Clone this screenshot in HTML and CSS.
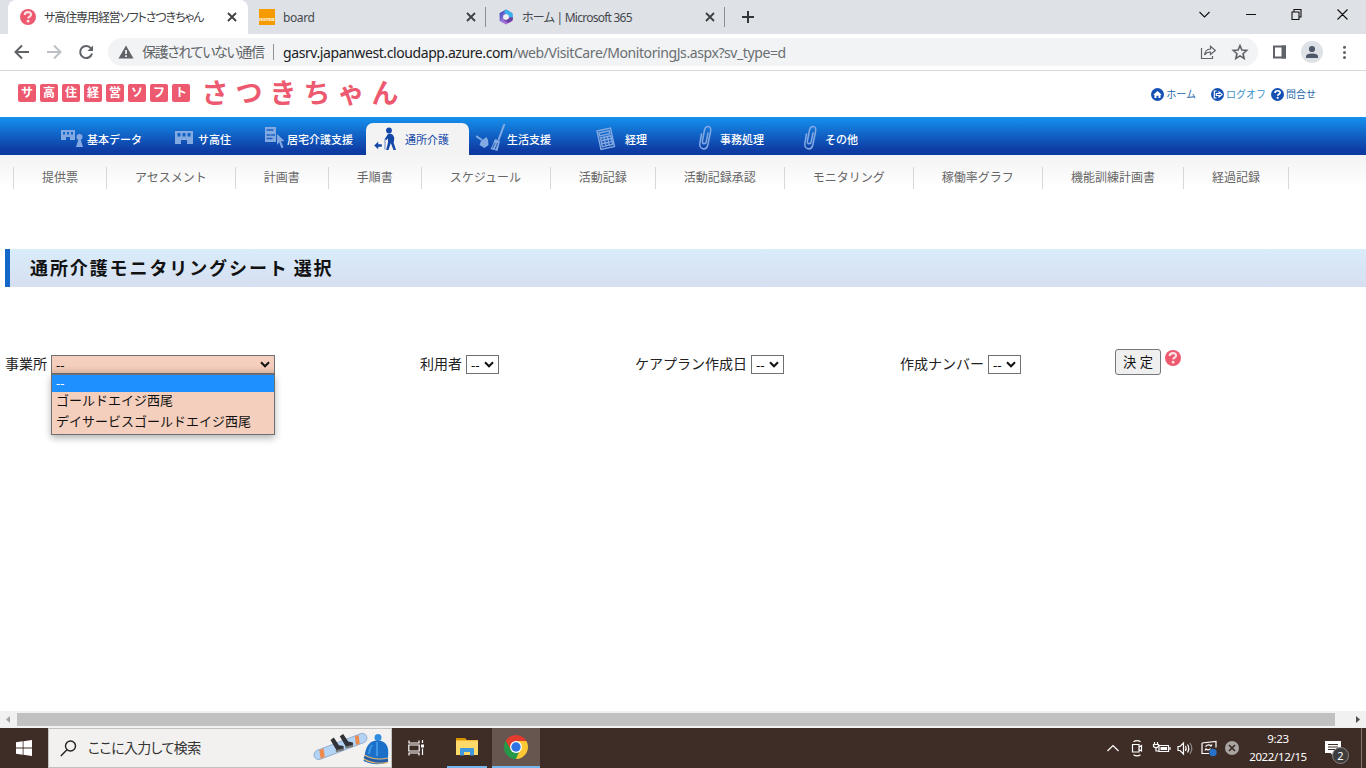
FILE: index.html
```html
<!DOCTYPE html>
<html lang="ja">
<head>
<meta charset="utf-8">
<title>サ高住専用経営ソフトさつきちゃん</title>
<link rel="stylesheet" href="styles.css">
</head>
<body>
<svg width="0" height="0" class="defs">
  <defs>
    <symbol id="help" viewBox="0 0 16 16"><circle cx="8" cy="8" r="8" fill="#ed5a70"/><path d="M4.700 6c.1-3.800 6.400-3.700 6.400-.5 0 2-2.800 2-2.900 3.900" fill="none" stroke="#fbe3e6" stroke-width="2.100"/><circle cx="8.100" cy="12.200" r="1.400" fill="#fbe3e6"/></symbol>
    <symbol id="x" viewBox="0 0 10 10"><path d="M1 1l8 8M9 1L1 9" stroke="#3c4043" stroke-width="1.800" fill="none"/></symbol>
    <symbol id="clip" viewBox="0 0 16 26"><path d="M3.500 9L2 17.500Q1 23 5 23.800Q9 24.500 10 19L12.500 7Q13.500 2 10.500 1.600Q7.500 1.300 6.500 5L4.500 15.500Q4 18.500 6 18.800Q7.800 19 8.300 16.500L10 8" fill="none" stroke="#83a9e3" stroke-width="1.500" stroke-linecap="round"/></symbol>
  </defs>
</svg>

<header class="tabstrip">
  <div class="tab tab-active">
    <svg class="fav" width="16" height="16"><use href="#help"/></svg>
    <span class="tab-title t1">サ高住専用経営ソフトさつきちゃん</span>
    <svg class="close" width="10" height="10"><use href="#x"/></svg>
  </div>
  <div class="tab tab-board">
    <span class="norma">norma</span>
    <span class="tab-title t2">board</span>
    <svg class="close" width="10" height="10"><use href="#x"/></svg>
  </div>
  <div class="tab tab-ms">
    <svg class="fav" width="16" height="16" viewBox="0 0 16 16"><defs><linearGradient id="m" x1="0" y1="0" x2="1" y2="1"><stop offset="0" stop-color="#3546b8"/><stop offset=".5" stop-color="#9a78dc"/><stop offset="1" stop-color="#b85fd2"/></linearGradient></defs><path d="M8 1.500L13.400 4.600V11.400L8 14.500L2.600 11.400V4.600Z" fill="url(#m)" stroke="url(#m)" stroke-width="2" stroke-linejoin="round"/><path d="M8 .5L14 4Q14.800 4.500 14.800 6V10L10.500 7.500V6L6.500 4Q6 1.500 8 .5" fill="#35b2ea"/><path d="M14.800 8V11Q14 12 10 14L5.500 11L10 9Z" fill="#6b3fa2"/><path d="M8 4.800L10.800 6.400V9.600L8 11.200L5.200 9.600V6.400Z" fill="#eef0f5"/></svg>
    <span class="tab-title t3">ホーム | Microsoft 365</span>
    <svg class="close" width="10" height="10"><use href="#x"/></svg>
  </div>
  <svg class="plus" width="12" height="12" viewBox="0 0 12 12"><path d="M6 0v12M0 6h12" stroke="#333639" stroke-width="2"/></svg>
  <div class="winctl">
    <svg width="154" height="14" viewBox="0 0 154 14" fill="none" stroke="#111" stroke-width="1.100"><path d="M.5 5l5 5 5-5M47 7.500h10M93 5h7v7.500h-7zM95 5V2.500h7V10h-2M138.500 2.500l10 10M148.500 2.500l-10 10"/></svg>
  </div>
</header>

<div class="toolbar">
  <svg class="navbtns" width="82" height="20" viewBox="0 0 82 20" fill="none" stroke-width="2"><path d="M15 10H2M8 3.500L1.500 10 8 16.500" stroke="#5f6368"/><path d="M33 10h13M40 3.500L46.500 10 40 16.500" stroke="#bdc1c6"/><path d="M77 6.500A6 6 0 1 0 78 11.500" stroke="#5f6368"/><path d="M79 3.500v5.500h-5.500z" fill="#5f6368"/></svg>
  <div class="omnibox">
    <svg class="warn" width="16" height="14" viewBox="0 0 16 14"><path d="M8 .5L15.500 13.500H.5Z" fill="#5f6368"/><path d="M8 5v4M8 10.300v1.700" stroke="#fff" stroke-width="1.600"/></svg>
    <span class="insecure">保護されていない通信</span>
    <span class="url">gasrv.japanwest.cloudapp.azure.com<span class="path">/web/VisitCare/MonitoringJs.aspx?sv_type=d</span></span>
    <svg class="omni-icons" width="50" height="16" viewBox="0 0 50 16" fill="none" stroke="#5f6368" stroke-width="1.200"><path d="M1.500 4v10.500h11V12M4.500 11Q5 5.500 10.500 5V2.300L15.300 6.500 10.500 10.500V8Q6.500 8 4.500 11Z"/><path d="M40 1.600l1.900 4.500 4.800.4-3.700 3.200 1.200 4.800-4.200-2.600-4.200 2.600L37 9.700l-3.700-3.200 4.800-.4Z" stroke-width="1.600"/></svg>
  </div>
  <svg class="right-icons" width="80" height="22" viewBox="0 0 80 22"><path d="M2 5.500h11v11H2z" fill="none" stroke="#5f6368" stroke-width="2"/><path d="M9.500 4.500h4.500v13H9.500z" fill="#5f6368"/><circle cx="40" cy="11" r="11" fill="#dee1e6"/><circle cx="40" cy="8" r="3.100" fill="#4e596c"/><path d="M34 17v-1.500q0-3 6-3t6 3V17z" fill="#4e596c"/><g fill="#5f6368"><circle cx="72.500" cy="6.200" r="1.500"/><circle cx="72.500" cy="11.400" r="1.500"/><circle cx="72.500" cy="16.600" r="1.500"/></g></svg>
</div>

<main class="page">
  <div class="brand">
    <div class="tiles"><span>サ</span><span>高</span><span>住</span><span>経</span><span>営</span><span>ソ</span><span>フ</span><span>ト</span></div>
    <div class="name"><span>さ</span><span>つ</span><span>き</span><span>ち</span><span>ゃ</span><span>ん</span></div>
    <div class="links">
      <a class="home"><svg width="13" height="13" viewBox="0 0 13 13"><circle cx="6.500" cy="6.500" r="6.500" fill="#1450b4"/><path d="M2.200 6.800L6.500 3l4.300 3.800H9.500V10h-2V7.700h-2V10h-2V6.800Z" fill="#fff"/></svg><span>ホーム</span></a>
      <a class="logoff"><svg width="13" height="13" viewBox="0 0 13 13"><circle cx="6.500" cy="6.500" r="6.500" fill="#1450b4"/><path d="M5.500 3H3.300v7h2.200M5.300 5.500h2.800V4l3 2.500-3 2.500V7.500H5.300Z" fill="none" stroke="#fff" stroke-width="1.200"/></svg><span>ログオフ</span></a>
      <a class="contact"><svg width="13" height="13" viewBox="0 0 13 13"><circle cx="6.500" cy="6.500" r="6.500" fill="#1450b4"/><path d="M4 5c0-3 5.200-2.900 5.200-.4 0 1.500-2.400 1.600-2.500 3.100" fill="none" stroke="#fff" stroke-width="1.700"/><circle cx="6.700" cy="9.800" r="1.100" fill="#fff"/></svg><span>問合せ</span></a>
    </div>
  </div>

  <nav class="mainnav">
    <a><svg width="24" height="22" viewBox="0 0 24 22" fill="#83a9e3"><path fill-rule="evenodd" d="M0 2h14v10H9V9H5v3H0zM2 4v2.500h2V4zm4 0v2.500h2V4zm4 0v2.500h2V4z"/><circle cx="18.500" cy="9" r="3"/><path d="M17.500 11h2l2.500 8h-7z"/></svg><span>基本データ</span></a>
    <a><svg width="20" height="22" viewBox="0 0 20 22" fill="#83a9e3"><path fill-rule="evenodd" d="M0 3h18v13h-6v-4H6v4H0zM2.500 5v3.500h3V5zm5 0v3.500h3V5zm5 0v3.500h3V5z"/></svg><span>サ高住</span></a>
    <a><svg width="22" height="24" viewBox="0 0 22 24"><path d="M0 0h11v15H0z" fill="#83a9e3"/><path d="M1.500 3h7M1.500 8h4M6 8h4M1.500 11.500h6" stroke="#1d62c2" stroke-width="1.300"/><path d="M12 7l7.500 7-3.500.3 2.500 6-2 1-2.300-6-2.200 2.600z" fill="#83a9e3"/></svg><span>居宅介護支援</span></a>
    <a class="current"><svg width="24" height="24" viewBox="0 0 24 24"><circle cx="15" cy="3.500" r="2.900" fill="#1347a8"/><path d="M14 7Q19 5.500 20.300 11l-.6 5 2.300 7h-2.500l-2.700-7-2.300 7h-2.300l1.800-7.500v-4l-1.700 1.500-1.700-.7z" fill="#1347a8"/><path d="M11 12v10.500" stroke="#6c8cc9"/><path d="M.2 18.500l4-3.800v2.500h3.600v2.600H4.200v2.500z" fill="#1347a8"/></svg><span>通所介護</span></a>
    <a><svg width="30" height="28" viewBox="0 0 30 28"><path d="M0 12l6 4M28.500 0l-6 16" stroke="#83a9e3" stroke-width="2"/><path d="M5 17l5.500-4 1.500 3 .5 5-4 3-5-3zM19 15l5 2-2.500 10-7-2 2-4z" fill="#83a9e3"/><path d="M16.500 24l2.500-5M19 25.500l2.500-6.500" stroke="#255eb5"/></svg><span>生活支援</span></a>
    <a><svg width="20" height="24" viewBox="0 0 20 24" fill="none" stroke="#83a9e3"><path d="M1 4L14.500 1l4 18.500L5 22.500zM3.200 6l10-2.200.6 3-10 2.200z" stroke-width="1.400"/><path d="M4.500 11l10.300-2.300 1.900 8.600-10.300 2.300zM5.200 13.800l10.200-2.300M5.800 16.700l10.300-2.300M7.900 10.200l2 8.700M11.400 9.500l1.900 8.600" stroke-width="1.400"/></svg><span>経理</span></a>
    <a><svg width="16" height="26"><use href="#clip"/></svg><span>事務処理</span></a>
    <a><svg width="16" height="26"><use href="#clip"/></svg><span>その他</span></a>
  </nav>

  <nav class="subnav">
    <a>提供票</a><a>アセスメント</a><a>計画書</a><a>手順書</a><a class="schedule">スケジュール</a><a>活動記録</a><a>活動記録承認</a><a>モニタリング</a><a>稼働率グラフ</a><a>機能訓練計画書</a><a>経過記録</a>
  </nav>

  <h1>通所介護モニタリングシート 選択</h1>

  <form class="filters">
    <div class="field">
      <label>事業所</label>
      <div class="select wide">--<svg width="10" height="7" viewBox="0 0 10 7"><path d="M1 1.300l4 4 4-4" fill="none" stroke="#111" stroke-width="2"/></svg>
        <ul class="menu"><li class="on">--</li><li>ゴールドエイジ西尾</li><li>デイサービスゴールドエイジ西尾</li></ul>
      </div>
    </div>
    <div class="field"><label>利用者</label><div class="select">--<svg width="10" height="7" viewBox="0 0 10 7"><path d="M1 1.300l4 4 4-4" fill="none" stroke="#111" stroke-width="2"/></svg></div></div>
    <div class="field"><label>ケアプラン作成日</label><div class="select">--<svg width="10" height="7" viewBox="0 0 10 7"><path d="M1 1.300l4 4 4-4" fill="none" stroke="#111" stroke-width="2"/></svg></div></div>
    <div class="field"><label>作成ナンバー</label><div class="select">--<svg width="10" height="7" viewBox="0 0 10 7"><path d="M1 1.300l4 4 4-4" fill="none" stroke="#111" stroke-width="2"/></svg></div></div>
    <div class="actions"><button type="button">決 定</button><svg width="16" height="16"><use href="#help"/></svg></div>
  </form>
</main>

<div class="hscroll">
  <svg width="17" height="17" viewBox="0 0 17 17"><path d="M10 5v7L6 8.500z" fill="#a3a3a3"/></svg>
  <div class="thumb"></div>
  <svg class="arrow-r" width="17" height="17" viewBox="0 0 17 17"><path d="M7 5v7l4-3.500z" fill="#505050"/></svg>
</div>

<footer class="taskbar">
  <div class="start"><svg width="16" height="16" viewBox="0 0 16 16" fill="#fff"><path d="M0 2.300L6.700 1.300V7.600H0zM7.500 1.200L16 0v7.600H7.500zM0 8.400h6.700v6.300L0 13.700zM7.500 8.400H16V16L7.500 14.800z"/></svg></div>
  <div class="search">
    <svg class="mag" width="17" height="17" viewBox="0 0 17 17" fill="none" stroke="#222" stroke-width="1.400"><circle cx="10.500" cy="6" r="5"/><path d="M7 9.700L.8 16"/></svg>
    <span>ここに入力して検索</span>
    <svg class="art" width="76" height="36" viewBox="0 0 76 36">
      <g transform="rotate(-21 27 18)"><rect x="0" y="12" width="56" height="9.500" rx="4.700" fill="#b3d4f5" stroke="#7f9fc4" stroke-width=".7"/><path d="M7 12.500h4.500l-2 8.500H5zM45 12.500h4l-2 8.500h-4z" fill="#ee8a4e"/><path d="M21 7l4-1 2 9 4 2.500-1 3-7-1zM31 7l4-1 2 9 4 2.500-1 3-7-1z" fill="#303238"/><path d="M22 19.500l8 1M32 19.500l8 1" stroke="#777" stroke-width="2"/></g>
      <circle cx="65" cy="7.500" r="3.500" fill="#2f8de0"/><path d="M51.500 27Q53 10 65 10.500T75 27v5Q64 37 50.500 31z" fill="#1c6fc9"/><path d="M59 15q-3 4-3 9M64 12v14" stroke="#3d96e4" stroke-width="2" fill="none"/><path d="M51.500 25Q62 31 75 28M51 29Q61 35 75 32.500" stroke="#edb05c" stroke-width="1.200" fill="none"/><path d="M51 27Q61 33 75 30.300" stroke="#2b5a9a" stroke-width="1.500" fill="none"/>
    </svg>
  </div>
  <div class="app taskview"><svg width="17" height="16" viewBox="0 0 17 16" fill="none" stroke="#fff" stroke-width="1.200"><path d="M1 .5V3h10V.5M1 15.500V13h10v2.500M.8 5h10.400v6H.8zM14.500 0v3M14.500 8.500V15"/><path d="M13 4.500h3v3h-3z" fill="#fff" stroke="none"/></svg></div>
  <div class="app explorer"><svg width="22" height="20" viewBox="0 0 22 20"><path d="M0 1h9l1.500 2H22v15H0z" fill="#f5b830"/><path d="M0 4h22v14H0z" fill="#ffda6b"/><path d="M0 1h9v2H0z" fill="#d99200"/><path d="M4 18.500V12q0-1 1-1h12q1 0 1 1v6.500h-4V15H8v3.500z" fill="#3f99dc"/></svg></div>
  <div class="app chrome"><svg width="24" height="24" viewBox="0 0 24 24"><path d="M12 12L1.610 6A12 12 0 0 1 22.390 6Z" fill="#e33b2e"/><path d="M12 12L22.390 6A12 12 0 0 1 12 24Z" fill="#fcc934"/><path d="M12 12L12 24A12 12 0 0 1 1.610 6Z" fill="#279847"/><path d="M12 6h10.400L17.200 15 12 24z" fill="#fcc934"/><path d="M1.610 6L12 6v6l-5.200 3z" fill="#e33b2e"/><path d="M1.610 6l5.200 9 5.200 3 3-1L12 24A12 12 0 0 1 1.610 6Z" fill="#279847"/><circle cx="12" cy="12" r="6" fill="#fff"/><circle cx="12" cy="12" r="4.700" fill="#2f73e3"/></svg></div>
  <svg class="tray" width="134" height="20" viewBox="0 0 134 20" fill="none" stroke="#fff" stroke-width="1.200">
    <path d="M1.500 13L7 7.500l5.500 5.500"/>
    <path d="M26.500 6.500h6.500v7.500h-6.500zM33 9l2.500-1.500v5.500L33 11.500M27.500 3.800q3.500-2.500 7 0M27.500 16.700q3.500 2.500 7 0"/>
    <path d="M53 7.500h9.500v6H53zM64 9v3"/><path d="M54.500 9h6.500v3h-6.500z" fill="#fff" stroke="none"/><path d="M48.500 4v2M51.500 4v2M47.500 6.500h5v2q-2.500 2.500-5 0zM50 9.500v3.500h3"/>
    <path d="M72 8.500h2l3.500-3.500v11L74 12.500h-2zM79.500 8q1.300 2.500 0 5M81.500 6.500q2.500 4 0 8"/><path d="M84 5q3.500 5.500 0 11" stroke="#888"/>
    <path d="M96 5l14-1.500v6M96 5v10.500h7M99.500 8.500q3-3 5.500-.5l1-1.500M104.500 10.500q-2 2.500-4.500.5l-1 1.500"/><circle cx="107" cy="14.500" r="3.700" fill="#2672c6" stroke="none"/>
    <circle cx="126" cy="10" r="7" fill="#aaa5a2" stroke="none"/><path d="M123 7l6 6M129 7l-6 6" stroke="#3b2c26" stroke-width="1.700"/>
  </svg>
  <div class="clock"><span>9:23</span><span>2022/12/15</span></div>
  <div class="notice"><svg width="16" height="17" viewBox="0 0 16 17"><path d="M0 0h16v12h-6v4.500L5.500 12H0z" fill="#fff"/><path d="M3 3.500h10M3 6h10M3 8.500h7" stroke="#3b2c26"/></svg><span class="badge">2</span></div>
  <div class="peek"></div>
</footer>
</body>
</html>
```
FILE: styles.css
```css
* { box-sizing: border-box; }
html, body { margin: 0; height: 100%; overflow: hidden; }
body {
  width: 1366px;
  height: 768px;
  display: flex;
  flex-direction: column;
  background: #fff;
  font-family: "Noto Sans", "Noto Sans CJK JP", sans-serif;
  color: #222;
}
svg { display: block; flex: none; }
.defs { position: absolute; }
span, a, label { white-space: nowrap; }

/* browser tabs */
.tabstrip {
  height: 34px;
  flex: none;
  display: flex;
  background: #dee1e6;
  padding-left: 8px;
}
.tab { height: 34px; display: flex; align-items: center; font-size: 12px; color: #45494d; }
.tab-title { flex: 1; font-family: "Noto Sans", "Noto Sans CJK JP", sans-serif; }
.tab-active { width: 240px; background: #fff; border-radius: 8px 8px 0 0; padding: 0 11px 0 12px; gap: 8px; color: #3c4043; }
.t1 { font-feature-settings: "palt"; letter-spacing: -1.08px; }
.t2 { letter-spacing: -0.4px; }
.t3 { font-feature-settings: "palt"; letter-spacing: -0.75px; }
.tab-board { width: 239px; padding: 0 11px; gap: 8px; }
.tab-board::after, .tab-ms::after { content: ""; flex: none; width: 1px; height: 20px; background: #8b8e92; margin-right: -12px; margin-left: 2px; }
.tab-ms { width: 239px; padding: 0 11px; gap: 8px; }
.tab-board .close, .tab-ms .close { margin-left: -1px; margin-right: 1px; }
.tab-board::after, .tab-ms::after { margin-left: 0; margin-right: -10px; }
.norma {
  width: 16px; height: 16px;
  background: #f59b00;
  color: #fff;
  font: bold 5px/20px "Liberation Sans", sans-serif;
  text-align: center;
}
.plus { margin: 11px 0 0 16px; }
.winctl { margin-left: auto; padding: 7px 13px 0 0; }

/* address bar */
.toolbar { height: 37px; flex: none; display: flex; align-items: center; border-bottom: 1px solid #d6d8db; padding-left: 14px; }
.navbtns { margin-right: 12px; }
.omnibox { width: 1150px; height: 28px; border-radius: 14px; background: #f1f3f4; display: flex; align-items: center; padding-left: 10px; }
.insecure { font-size: 14px; color: #5f6368; font-feature-settings: "palt"; letter-spacing: -1.35px; width: 132px; margin-left: 8px; line-height: 16px; border-right: 1px solid #8d9094; }
.url { margin-left: 9px; font-size: 14px; color: #202124; letter-spacing: -0.41px; }
.path { color: #6b6f73; }
.omni-icons { margin-left: auto; margin-right: 8px; }
.right-icons { margin-left: 14px; }

/* application header */
.page { height: 640px; flex: none; overflow: hidden; }
.brand { height: 46px; display: flex; padding-left: 18px; }
.tiles { display: flex; gap: 4px; padding-top: 13px; }
.tiles span { width: 18px; height: 18px; border-radius: 2px; background: #ed5a70; color: #fff; font-size: 12px; font-weight: bold; line-height: 17px; text-align: center; }
.name { display: flex; margin-left: 8px; color: #ed5a70; font-family: "Noto Sans CJK JP", sans-serif; font-size: 27px; font-weight: 700; line-height: 41px; }
.name span { width: 34px; text-align: center; }
.links { display: flex; margin-left: auto; padding: 17px 50px 0 0; height: 30px; font-size: 10px; color: #2669a8; }
.links a { display: flex; align-items: center; gap: 2px; height: 13px; }
.links a span { margin-top: -2px; }
.home { margin-right: 15px; }
.logoff { margin-right: 5px; color: #3a93cc; }

.mainnav {
  height: 38px;
  display: grid;
  grid-template-columns: 114px 90px 101px 103px 120px 103px 105px 120px;
  padding-left: 61px;
  background: linear-gradient(#1591ee, #0e3ea5 85%, #0c3aa0);
  color: #fff;
  font-size: 11px;
  font-weight: 500;
}
.mainnav a { display: flex; align-items: center; padding-top: 6px; font-family: "Noto Sans CJK JP", sans-serif; }
.mainnav a span { margin-top: -1px; }
.mainnav a:nth-child(1) { gap: 2px; }
.mainnav a:nth-child(2) { gap: 3px; }
.mainnav a:nth-child(5) { gap: 1px; padding-left: 7px; padding-top: 4px; }
.mainnav a:nth-child(6) { gap: 9px; padding-left: 7px; }
.mainnav a:nth-child(7) { gap: 6px; padding-left: 6px; padding-top: 4px; }
.mainnav a:nth-child(8) { gap: 6px; padding-left: 6px; padding-top: 4px; }
.mainnav a:nth-child(5) span, .mainnav a:nth-child(7) span, .mainnav a:nth-child(8) span { margin-top: 1px; }
.mainnav .current { margin-top: 6px; padding: 0 0 0 8px; gap: 7px; background: #f3f3f3; color: #1347a8; border-radius: 7px 7px 0 0; font-weight: 400; }

.subnav { height: 40px; display: flex; align-items: flex-start; padding: 12px 0 0 13px; background: linear-gradient(#f3f3f3, #fff 80%); font-size: 12px; color: #666; }
.subnav a { height: 22px; line-height: 21px; padding: 0 28px; border-left: 1px solid #d8d8d8; }
.subnav .schedule { width: 129px; }
.subnav a:last-child { border-right: 1px solid #d8d8d8; }

h1 {
  margin: 54px 0 0 5px;
  height: 38px;
  border-left: 5px solid #1267c8;
  padding-left: 20px;
  background: linear-gradient(#d9ecfa, #d6dff1);
  color: #111;
  font-family: "Noto Sans CJK JP", sans-serif;
  font-size: 18px;
  line-height: 37px;
  letter-spacing: 1.900px;
  word-spacing: -1px;
}

/* selection form */
.filters { display: grid; grid-template-columns: 415px 215px 265px 215px 1fr; align-items: start; margin: 62px 0 0 5px; font-size: 14px; }
.field { display: flex; align-items: center; gap: 4px; height: 19px; margin-top: 6px; }
.field label { margin-top: -3px; }
.select { position: relative; display: flex; align-items: center; justify-content: space-between; width: 33px; height: 19px; border: 1px solid #6f7074; padding: 0 4px; font: 13.300px "Noto Sans", "Noto Sans CJK JP", sans-serif; color: #111; }
.wide { width: 224px; background: linear-gradient(#f5cfbd 55%, #e3bba9); }
.menu {
  position: absolute;
  left: -1px; top: 18px;
  width: 224px; height: 61px;
  margin: 0; padding: 0;
  list-style: none;
  background: #f5cfbd;
  border: 1px solid #707070;
  box-shadow: 0 3px 7px rgba(0, 0, 0, .3);
  font-size: 13px;
  color: #111;
}
.menu li { height: 21px; line-height: 17px; padding-left: 4px; white-space: nowrap; }
.menu .on { height: 17px; line-height: 16px; background: #1e90ff; color: #fff; }
.actions { display: flex; align-items: flex-start; gap: 4px; }
.actions button { width: 46px; height: 26px; padding: 0; border: 1px solid #76777b; border-radius: 3px; background: #efefef; font: 13.300px/21px "Noto Sans", "Noto Sans CJK JP", sans-serif; color: #111; }
.actions svg { margin-top: 1px; }

/* horizontal scrollbar */
.hscroll { height: 17px; flex: none; display: flex; background: #f1f1f1; }
.thumb { width: 1318px; height: 13px; margin-top: 2px; background: #c1c1c1; }
.arrow-r { margin-left: auto; }

/* desktop taskbar */
.taskbar { height: 40px; flex: none; display: flex; background: #3e2d26; }
.start { width: 48px; display: flex; align-items: center; justify-content: center; }
.search { width: 344px; display: flex; align-items: center; background: #f2f1f0; border: 1px solid #c4c2c1; padding: 0 2px 0 11px; font-size: 14px; color: #333; }
.search span { margin: -2px 0 0 11px; font-feature-settings: "palt"; letter-spacing: -0.6px; }
.art { margin-left: auto; }
.app { display: flex; align-items: center; justify-content: center; }
.taskview { width: 50px; padding-right: 2px; }
.explorer { width: 40px; margin-left: 5px; border-bottom: 2px solid #75b7ed; }
.chrome { width: 48px; margin-left: 5px; background: #67564f; border-bottom: 2px solid #75b7ed; }
.tray { margin: 10px 0 0 566px; }
.clock { width: 66px; margin-left: 5px; display: flex; flex-direction: column; align-items: center; padding-top: 2px; font-size: 11.500px; line-height: 18px; color: #fff; letter-spacing: -0.35px; }
.notice { position: relative; margin: 13px 0 0 14px; width: 26px; height: 24px; }
.badge { position: absolute; left: 7px; top: 6px; width: 17px; height: 17px; border-radius: 50%; background: #3d3d3d; border: 1px solid #8b8583; color: #fff; font-size: 11px; line-height: 15px; text-align: center; }
.peek { width: 1px; margin-left: auto; margin-right: 4px; background: #85776f; }
```
